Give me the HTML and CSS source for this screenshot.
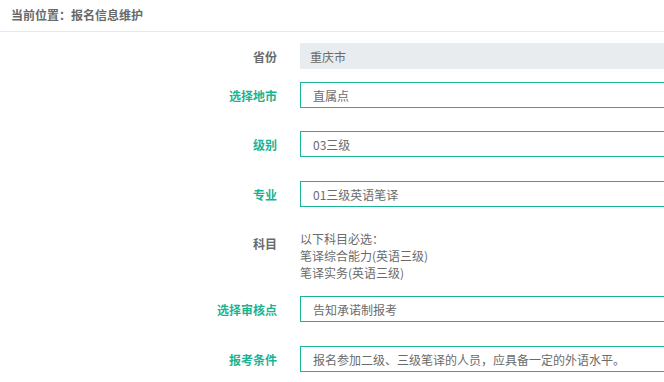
FILE: index.html
```html
<!DOCTYPE html>
<html>
<head>
    <meta charset="utf-8">
    <title>报名信息维护</title>
    <link rel="stylesheet" href="styles.css">
</head>
<body>
<div class="breadcrumb">当前位置：报名信息维护</div>

<form class="form-box">
    <div class="form-row row-province">
        <label class="form-label">省份</label>
        <div class="form-field">
            <input class="form-control disabled" type="text" value="重庆市" readonly>
        </div>
    </div>
    <div class="form-row row-city">
        <label class="form-label required">选择地市</label>
        <div class="form-field">
            <input class="form-control" type="text" value="直属点" readonly>
        </div>
    </div>
    <div class="form-row row-level">
        <label class="form-label required">级别</label>
        <div class="form-field">
            <input class="form-control" type="text" value="03三级" readonly>
        </div>
    </div>
    <div class="form-row row-major">
        <label class="form-label required">专业</label>
        <div class="form-field">
            <input class="form-control" type="text" value="01三级英语笔译" readonly>
        </div>
    </div>
    <div class="form-row row-subject">
        <label class="form-label subject-label">科目</label>
        <div class="form-field subject-list">
            <div>以下科目必选：</div>
            <div>笔译综合能力(英语三级)</div>
            <div>笔译实务(英语三级)</div>
        </div>
    </div>
    <div class="form-row row-audit">
        <label class="form-label required">选择审核点</label>
        <div class="form-field">
            <input class="form-control" type="text" value="告知承诺制报考" readonly>
        </div>
    </div>
    <div class="form-row row-cond">
        <label class="form-label required">报考条件</label>
        <div class="form-field">
            <input class="form-control" type="text" value="报名参加二级、三级笔译的人员，应具备一定的外语水平。" readonly>
        </div>
    </div>
</form>
</body>
</html>
```

FILE: styles.css
```css
body {
    margin: 0;
    font-family: "Noto Sans CJK SC", "Liberation Sans", sans-serif;
    font-size: 12px;
    color: #676a6c;
    background: #fff;
}

.breadcrumb {
    height: 31px;
    line-height: 30px;
    padding-left: 11px;
    font-weight: bold;
    color: #676a6c;
    border-bottom: 1px solid #e7eaec;
}

.form-box {
    margin: 0;
}

.form-row {
    display: flex;
    align-items: center;
}

.row-province { margin-top: 11px; }
.row-city { margin-top: 13px; }
.row-level { margin-top: 23px; }
.row-major { margin-top: 24px; }
.row-subject { margin-top: 23px; align-items: flex-start; }
.row-audit { margin-top: 15px; }
.row-cond { margin-top: 24px; }

.form-label {
    width: 277px;
    flex-shrink: 0;
    text-align: right;
    font-weight: bold;
    color: #676a6c;
}

.form-label.required {
    color: #1ab394;
}

.subject-label {
    padding-top: 5px;
    line-height: 17px;
}

.form-field {
    margin-left: 23px;
    flex: 1;
    min-width: 0;
}

/* the boxes run on past the right edge of the window */
.form-control {
    box-sizing: border-box;
    display: block;
    width: 100%;
    height: 26px;
    margin: 0;
    padding: 0 12px;
    font-family: "Noto Sans CJK SC", "Liberation Sans", sans-serif;
    font-size: 12px;
    color: #6b6b6b;
    background: #fff;
    border: 1px solid #1ab394;
    border-right: 0;
    border-radius: 0;
    outline: none;
}

.form-control.disabled {
    padding-left: 9px;
    background: #e9ecef;
    border-color: #e9ecef;
}

.subject-list {
    line-height: 17px;
    color: #6b6b6b;
}
```
